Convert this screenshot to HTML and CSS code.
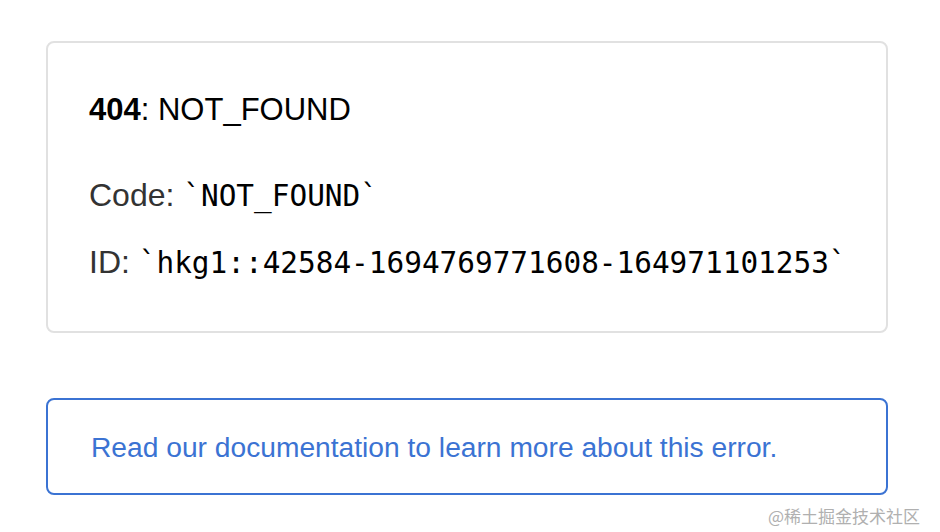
FILE: index.html
```html
<!DOCTYPE html>
<html>
<head>
<meta charset="utf-8">
<link rel="stylesheet" href="styles.css">
</head>
<body>
<main class="page">
  <section class="error-box">
    <p class="heading"><strong>404</strong>: NOT_FOUND</p>
    <p class="detail">Code: <code>`NOT_FOUND`</code></p>
    <p class="detail id">ID: <code>`hkg1::42584-1694769771608-164971101253`</code></p>
  </section>
  <a class="doc-link" href="#">Read our documentation to learn more about this error.</a>
</main>
<div class="watermark">@稀土掘金技术社区</div>
</body>
</html>
```
FILE: styles.css
```css
html, body {
  margin: 0;
  padding: 0;
  background: #ffffff;
}
body {
  font-family: "Liberation Sans", Arial, sans-serif;
  width: 940px;
  height: 532px;
  overflow: hidden;
  position: relative;
}
.page {
  padding: 41px 0 0 46px;
  display: flex;
  flex-direction: column;
  width: 842px;
}
.error-box {
  border: 2px solid #e1e1e1;
  border-radius: 8px;
  padding: 47px 20px 48px 41px;
  display: flex;
  flex-direction: column;
}
.error-box p {
  margin: 0;
  font-size: 32px;
  line-height: 40px;
  white-space: nowrap;
}
.heading {
  color: #000;
  font-size: 31px !important;
}
.heading strong {
  font-weight: 700;
}
.detail {
  color: #333;
  margin-top: 45px !important;
}
.detail.id {
  margin-top: 26px !important;
}
.detail code {
  font-family: "DejaVu Sans Mono", "Liberation Mono", monospace;
  font-size: 29.4px;
  color: #000;
}
.doc-link {
  margin-top: 65px;
  border: 2px solid #3b73d3;
  border-radius: 8px;
  padding: 30px 43px 29px;
  font-size: 28.2px;
  line-height: 34px;
  color: #3b73d3;
  text-decoration: none;
}
.watermark {
  position: absolute;
  right: 20px;
  bottom: 4px;
  font-family: "Noto Sans CJK SC", sans-serif;
  font-size: 17px;
  color: #b0b0b0;
}
```
